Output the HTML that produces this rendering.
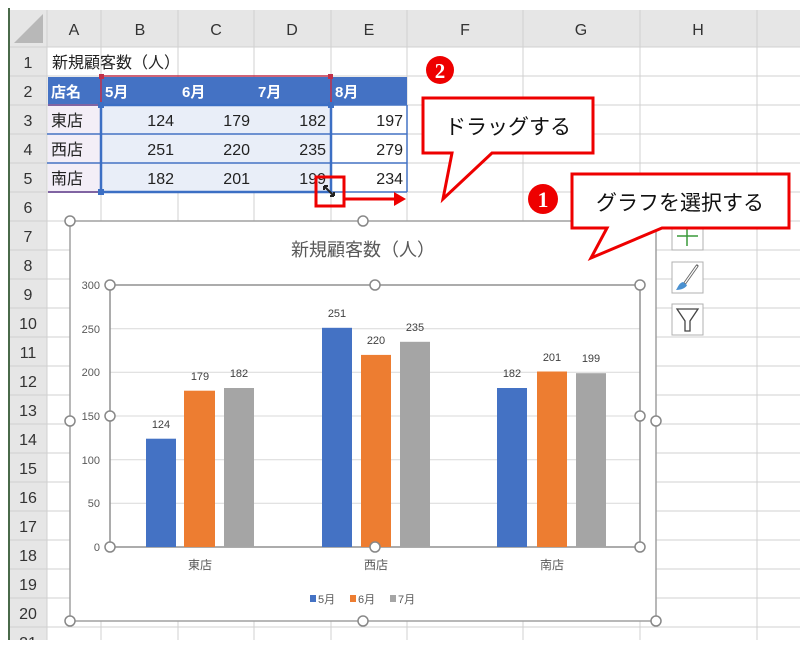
<!DOCTYPE html>
<html><head><meta charset="utf-8"><style>
html,body{margin:0;padding:0;background:#fff;}
svg{display:block;font-family:"Liberation Sans","Noto Sans CJK JP",sans-serif;}
</style></head><body>
<svg width="800" height="654" viewBox="0 0 800 654" xmlns="http://www.w3.org/2000/svg">
<rect width="800" height="654" fill="#fff"/>
<!-- column header -->
<rect x="10" y="10" width="790" height="37" fill="#e6e6e6"/>
<rect x="10" y="47" width="37" height="593" fill="#e6e6e6"/>
<polygon points="43,14 43,43 14,43" fill="#b8b8b8"/>
<line x1="9" y1="8" x2="9" y2="640" stroke="#4a6a4a" stroke-width="2"/>
<g stroke="#d0d0d0" stroke-width="1">
<line x1="47" y1="10" x2="47" y2="640"/><line x1="101" y1="10" x2="101" y2="640"/><line x1="178" y1="10" x2="178" y2="640"/><line x1="254" y1="10" x2="254" y2="640"/><line x1="331" y1="10" x2="331" y2="640"/><line x1="407" y1="10" x2="407" y2="640"/><line x1="523" y1="10" x2="523" y2="640"/><line x1="640" y1="10" x2="640" y2="640"/><line x1="757" y1="10" x2="757" y2="640"/>
<line x1="10" y1="47" x2="800" y2="47"/><line x1="10" y1="76" x2="800" y2="76"/><line x1="10" y1="105" x2="800" y2="105"/><line x1="10" y1="134" x2="800" y2="134"/><line x1="10" y1="163" x2="800" y2="163"/><line x1="10" y1="192" x2="800" y2="192"/><line x1="10" y1="221" x2="800" y2="221"/><line x1="10" y1="250" x2="800" y2="250"/><line x1="10" y1="279" x2="800" y2="279"/><line x1="10" y1="308" x2="800" y2="308"/><line x1="10" y1="337" x2="800" y2="337"/><line x1="10" y1="366" x2="800" y2="366"/><line x1="10" y1="395" x2="800" y2="395"/><line x1="10" y1="424" x2="800" y2="424"/><line x1="10" y1="453" x2="800" y2="453"/><line x1="10" y1="482" x2="800" y2="482"/><line x1="10" y1="511" x2="800" y2="511"/><line x1="10" y1="540" x2="800" y2="540"/><line x1="10" y1="569" x2="800" y2="569"/><line x1="10" y1="598" x2="800" y2="598"/><line x1="10" y1="627" x2="800" y2="627"/>
</g>
<g font-size="16" fill="#333" text-anchor="middle">
<text x="74" y="35">A</text><text x="140" y="35">B</text><text x="216" y="35">C</text><text x="292" y="35">D</text><text x="369" y="35">E</text><text x="465" y="35">F</text><text x="581" y="35">G</text><text x="698" y="35">H</text>
<text x="28" y="68">1</text><text x="28" y="97">2</text><text x="28" y="126">3</text><text x="28" y="155">4</text><text x="28" y="184">5</text><text x="28" y="213">6</text><text x="28" y="242">7</text><text x="28" y="271">8</text><text x="28" y="300">9</text><text x="28" y="329">10</text><text x="28" y="358">11</text><text x="28" y="387">12</text><text x="28" y="416">13</text><text x="28" y="445">14</text><text x="28" y="474">15</text><text x="28" y="503">16</text><text x="28" y="532">17</text><text x="28" y="561">18</text><text x="28" y="590">19</text><text x="28" y="619">20</text><text x="28" y="648">21</text>
</g>
<rect x="0" y="640" width="800" height="14" fill="#fff"/>
<!-- table -->
<rect x="48" y="77" width="359" height="28" fill="#4472c4"/>
<rect x="48" y="106" width="53" height="86" fill="#f3eef7"/>
<rect x="102" y="106" width="229" height="86" fill="#e9eef8"/>
<g stroke="#4472c4" stroke-width="1.5"><line x1="47" y1="134" x2="407" y2="134"/><line x1="47" y1="163" x2="407" y2="163"/><line x1="331" y1="105" x2="407" y2="105"/><line x1="331" y1="192" x2="407" y2="192"/><line x1="407" y1="105" x2="407" y2="192"/></g>
<text x="52" y="68" font-size="16" fill="#222">新規顧客数（人）</text>
<g font-size="15" font-weight="bold" fill="#fff"><text x="51" y="97">店名</text><text x="105" y="97">5月</text><text x="182" y="97">6月</text><text x="258" y="97">7月</text><text x="335" y="97">8月</text></g>
<g font-size="16" fill="#222"><text x="51" y="126">東店</text><text x="51" y="155">西店</text><text x="51" y="184">南店</text></g>
<g font-size="16" fill="#222" text-anchor="end">
<text x="174" y="126">124</text><text x="250" y="126">179</text><text x="326" y="126">182</text><text x="403" y="126">197</text>
<text x="174" y="155">251</text><text x="250" y="155">220</text><text x="326" y="155">235</text><text x="403" y="155">279</text>
<text x="174" y="184">182</text><text x="250" y="184">201</text><text x="326" y="184">199</text><text x="403" y="184">234</text>
</g>
<line x1="48" y1="105" x2="101" y2="105" stroke="#8064a2" stroke-width="2"/><line x1="48" y1="192" x2="101" y2="192" stroke="#8064a2" stroke-width="2"/>
<rect x="101" y="76" width="230" height="29" fill="none" stroke="#c0304a" stroke-width="1.5"/>
<rect x="99" y="74" width="5" height="5" fill="#c0304a"/><rect x="328" y="74" width="5" height="5" fill="#c0304a"/>
<rect x="101" y="105" width="230" height="87" fill="none" stroke="#3c6fc4" stroke-width="2.5"/>
<rect x="98" y="102" width="6" height="6" fill="#3c6fc4"/><rect x="328" y="102" width="6" height="6" fill="#3c6fc4"/><rect x="98" y="189" width="6" height="6" fill="#3c6fc4"/>
<path d="M324 186 L334 196 M324 186 l0 4 M324 186 l4 0 M334 196 l0 -4 M334 196 l-4 0" stroke="#222" stroke-width="2" fill="none"/>
<rect x="316" y="177" width="28" height="29" fill="none" stroke="#e00" stroke-width="3"/>
<line x1="344" y1="199" x2="398" y2="199" stroke="#e00" stroke-width="3"/><polygon points="406,199 394,192 394,206" fill="#e00"/>
<!-- chart -->
<rect x="70" y="221" width="586" height="400" fill="#fff" stroke="#a0a0a0" stroke-width="1.5"/>
<text x="363" y="256" font-size="18" fill="#595959" text-anchor="middle">新規顧客数（人）</text>
<g stroke="#d9d9d9" stroke-width="1"><line x1="110" y1="328.7" x2="640" y2="328.7"/><line x1="110" y1="372.3" x2="640" y2="372.3"/><line x1="110" y1="416" x2="640" y2="416"/><line x1="110" y1="459.7" x2="640" y2="459.7"/><line x1="110" y1="503.3" x2="640" y2="503.3"/></g>
<rect x="110" y="285" width="530" height="262" fill="none" stroke="#909090" stroke-width="1.5"/>
<g font-size="11" fill="#595959" text-anchor="end"><text x="100" y="289">300</text><text x="100" y="333">250</text><text x="100" y="376">200</text><text x="100" y="420">150</text><text x="100" y="464">100</text><text x="100" y="507">50</text><text x="100" y="551">0</text></g>
<g>
<rect x="146" y="438.7" width="30" height="108.3" fill="#4472c4"/><rect x="184" y="390.7" width="31" height="156.3" fill="#ed7d31"/><rect x="224" y="388" width="30" height="159" fill="#a5a5a5"/>
<rect x="322" y="327.8" width="30" height="219.2" fill="#4472c4"/><rect x="361" y="354.9" width="30" height="192.1" fill="#ed7d31"/><rect x="400" y="341.8" width="30" height="205.2" fill="#a5a5a5"/>
<rect x="497" y="388" width="30" height="159" fill="#4472c4"/><rect x="537" y="371.5" width="30" height="175.5" fill="#ed7d31"/><rect x="576" y="373.2" width="30" height="173.8" fill="#a5a5a5"/>
</g>
<g font-size="11" fill="#404040" text-anchor="middle">
<text x="161" y="428">124</text><text x="200" y="380">179</text><text x="239" y="377">182</text>
<text x="337" y="317">251</text><text x="376" y="344">220</text><text x="415" y="331">235</text>
<text x="512" y="377">182</text><text x="552" y="361">201</text><text x="591" y="362">199</text>
</g>
<g font-size="12" fill="#595959" text-anchor="middle"><text x="200" y="569">東店</text><text x="376" y="569">西店</text><text x="552" y="569">南店</text></g>
<g font-size="11" fill="#595959"><rect x="310" y="595" width="6" height="7" fill="#4472c4"/><text x="318" y="603">5月</text><rect x="350" y="595" width="6" height="7" fill="#ed7d31"/><text x="358" y="603">6月</text><rect x="390" y="595" width="6" height="7" fill="#a5a5a5"/><text x="398" y="603">7月</text></g>
<g fill="#fff" stroke="#888" stroke-width="1.5">
<circle cx="70" cy="221" r="5"/><circle cx="363" cy="221" r="5"/><circle cx="656" cy="221" r="5"/><circle cx="70" cy="421" r="5"/><circle cx="656" cy="421" r="5"/><circle cx="70" cy="621" r="5"/><circle cx="363" cy="621" r="5"/><circle cx="656" cy="621" r="5"/>
<circle cx="110" cy="285" r="5"/><circle cx="375" cy="285" r="5"/><circle cx="640" cy="285" r="5"/><circle cx="110" cy="416" r="5"/><circle cx="640" cy="416" r="5"/><circle cx="110" cy="547" r="5"/><circle cx="375" cy="547" r="5"/><circle cx="640" cy="547" r="5"/>
</g>
<!-- side buttons -->
<g fill="#fff" stroke="#b0b0b0" stroke-width="1"><rect x="672" y="221" width="31" height="29"/><rect x="672" y="262" width="31" height="31"/><rect x="672" y="304" width="31" height="31"/></g>
<path d="M687 226 V246 M677 236 H698" stroke="#3a9a3a" stroke-width="1.5"/>
<path d="M697 266 L685 283" stroke="#666" stroke-width="3" stroke-linecap="round"/><path d="M697 266 L685 283" stroke="#fff" stroke-width="1.2"/>
<path d="M683 282 C679 283 678 287 676 290 C681 290 686 288 687 285 Z" fill="#4a90d0"/>
<path d="M677 309 H698 L690 321 V331 H685 V321 Z" fill="none" stroke="#444" stroke-width="1.3"/>
<!-- callouts -->
<path d="M423 98 H593 V153 H492 L443 199 L452 153 H423 Z" fill="#fff" stroke="#e00" stroke-width="3" stroke-linejoin="miter"/>
<text x="508" y="134" font-size="21" fill="#111" text-anchor="middle">ドラッグする</text>
<path d="M572 174 H789 V228 H662 L591 258 L607 228 H572 Z" fill="#fff" stroke="#e00" stroke-width="3"/>
<text x="680" y="210" font-size="21" fill="#111" text-anchor="middle">グラフを選択する</text>
<circle cx="440" cy="70" r="14" fill="#e00"/><text x="440" y="78" font-size="21" font-weight="bold" fill="#fff" text-anchor="middle" font-family="Liberation Serif,serif">2</text>
<circle cx="543" cy="199" r="15" fill="#e00"/><text x="543" y="207" font-size="22" font-weight="bold" fill="#fff" text-anchor="middle" font-family="Liberation Serif,serif">1</text>
</svg>
</body></html>
